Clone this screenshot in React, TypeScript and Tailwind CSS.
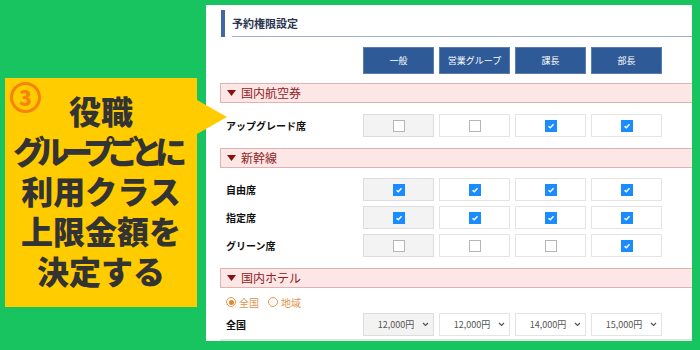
import React from "react";

const JP = "font-['Noto_Sans_CJK_JP','Noto_Sans',sans-serif]";

function Check({ on }: { on: boolean }) {
  if (on)
    return (
      <div className="w-[12px] h-[12px] bg-[#1a8cff] flex items-center justify-center">
        <svg width="8" height="8" viewBox="0 0 8 8">
          <path d="M1.5 4.2 L3.3 5.8 L6.5 2.3" stroke="white" strokeWidth="1.4" fill="none" />
        </svg>
      </div>
    );
  return <div className="w-[12px] h-[12px] border border-[#b5b5b5] bg-white" />;
}

function Cell({ first, children }: { first?: boolean; children: React.ReactNode }) {
  return (
    <div
      className={
        "w-[71px] h-full border flex items-center justify-center " +
        (first ? "bg-[#f3f3f3] border-[#dddddd]" : "bg-white border-[#e4e4e4]")
      }
    >
      {children}
    </div>
  );
}

function CheckRow({ label, vals, mt }: { label: string; vals: boolean[]; mt: string }) {
  return (
    <div className={"flex h-[23px] " + mt}>
      <div className="w-[143px] pl-[6px] flex items-center text-[10px] font-bold text-[#111]">{label}</div>
      <div className="flex gap-[5px] h-full">
        {vals.map((v, i) => (
          <Cell key={i} first={i === 0}>
            <Check on={v} />
          </Cell>
        ))}
      </div>
    </div>
  );
}

function Section({ title, mt }: { title: string; mt: string }) {
  return (
    <div className={"h-[20px] bg-[#fde6e6] border border-[#e0b2b2] border-r-0 flex items-center pl-[6px] " + mt}>
      <svg width="9" height="6" viewBox="0 0 9 6" className="mr-[5px]">
        <path d="M0 0 H9 L4.5 6 Z" fill="#8a0f0f" />
      </svg>
      <span className="text-[12px] text-[#8e2222] leading-none">{title}</span>
    </div>
  );
}

export default function App() {
  const heads = ["一般", "営業グループ", "課長", "部長"];
  const prices = ["12,000円", "12,000円", "14,000円", "15,000円"];
  return (
    <div className={"w-[700px] h-[350px] bg-[#17c45f] flex overflow-hidden " + JP}>
      <div className="w-[206px] shrink-0">
        <div className="relative ml-[5px] mt-[78px] w-[192px] h-[229px] bg-[#ffcc00]">
          <div className="absolute left-[5px] top-[4px] w-[31px] h-[31px] rounded-full border-[3px] border-[#f7820c] flex items-center justify-center">
            <span className="text-[21px] font-black text-[#f7820c] leading-none">3</span>
          </div>
          <div className="absolute left-full top-[22px] z-10 w-0 h-0 border-l-[30px] border-l-[#ffcc00] border-y-[17px] border-y-transparent" />
          <div className="pt-[12px] text-center text-[32px] font-black leading-[40px] text-[#333333] whitespace-nowrap">
            <div>役職</div>
            <div className="tracking-[-8px] pr-[10px]">グループごとに</div>
            <div>利用クラス</div>
            <div>上限金額を</div>
            <div>決定する</div>
          </div>
        </div>
      </div>
      <div className="mt-[5px] w-[486px] h-[336px] bg-white pl-[14px] flex flex-col">
        <div className="mt-[5px] ml-[1px] flex h-[27px]">
          <div className="w-[4px] h-full bg-[#4268a3]" />
          <div className="ml-[7px] flex-1 border-b border-[#9fb0c6] flex items-center text-[11px] font-bold text-[#2a3550]">
            予約権限設定
          </div>
        </div>
        <div className="mt-[10px] flex h-[27px] pl-[143px] gap-[5px]">
          {heads.map((h) => (
            <div
              key={h}
              className="w-[71px] h-full bg-[#2f5a98] border border-[#5a7db0] flex items-center justify-center text-[9px] text-white"
            >
              {h}
            </div>
          ))}
        </div>
        <Section title="国内航空券" mt="mt-[9px]" />
        <CheckRow label="アップグレード席" vals={[false, false, true, true]} mt="mt-[11px]" />
        <Section title="新幹線" mt="mt-[11px]" />
        <CheckRow label="自由席" vals={[true, true, true, true]} mt="mt-[10px]" />
        <CheckRow label="指定席" vals={[true, true, true, true]} mt="mt-[5px]" />
        <CheckRow label="グリーン席" vals={[false, false, false, true]} mt="mt-[5px]" />
        <Section title="国内ホテル" mt="mt-[11px]" />
        <div className="mt-[4px] h-[20px] pl-[6px] flex items-center text-[10px] text-[#dc9550]">
          <div className="w-[10px] h-[10px] rounded-full border border-[#e09a55] flex items-center justify-center mr-[3px]">
            <div className="w-[5px] h-[5px] rounded-full bg-[#e8862a]" />
          </div>
          <span>全国</span>
          <div className="w-[10px] h-[10px] rounded-full border border-[#e09a55] ml-[9px] mr-[3px]" />
          <span>地域</span>
        </div>
        <div className="mt-[1px] flex h-[23px]">
          <div className="w-[143px] pl-[6px] flex items-center text-[10px] font-bold text-[#111]">全国</div>
          <div className="flex gap-[5px] h-full">
            {prices.map((p, i) => (
              <Cell key={i} first={i === 0}>
                <div className="flex w-full items-center pl-[6px] pr-[4px]">
                  <span className="flex-1 text-center text-[9px] text-[#555]">{p}</span>
                  <svg width="7" height="5" viewBox="0 0 7 5">
                    <path d="M1 1 L3.5 3.5 L6 1" stroke="#555" strokeWidth="1.2" fill="none" />
                  </svg>
                </div>
              </Cell>
            ))}
          </div>
        </div>
        <div className="mt-auto h-[2px] bg-[#e2e2e2]" />
      </div>
    </div>
  );
}
